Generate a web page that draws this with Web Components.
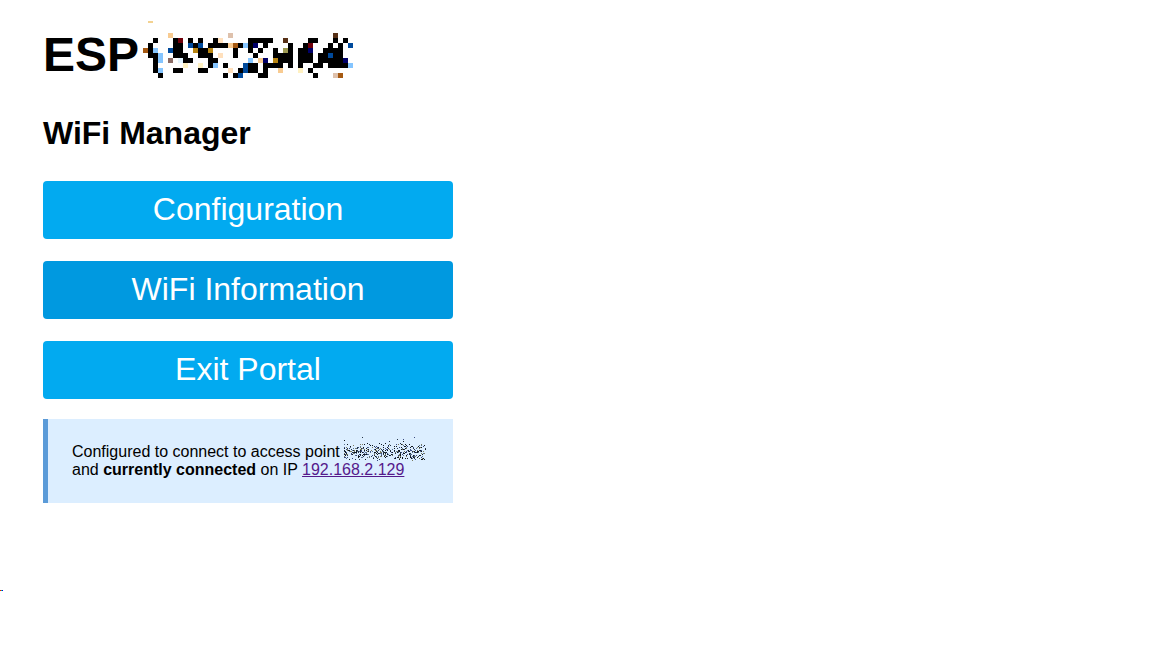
<!DOCTYPE html>
<html lang="en">
<head>
<meta charset="utf-8">
<meta name="viewport" content="width=device-width, initial-scale=1">
<title>WiFi Manager</title>
<style>
body { margin: 0; background: #fff; color: #000; font-family: "Liberation Sans", Arial, sans-serif; }
</style>
</head>
<body>
<wifi-portal>
  <portal-heading slot="title">ESP</portal-heading>
  <span slot="subtitle">WiFi Manager</span>
  <portal-button>Configuration</portal-button>
  <portal-button active>WiFi Information</portal-button>
  <portal-button>Exit Portal</portal-button>
  <status-note slot="status">Configured to connect to access point <masked-name></masked-name><br>and <strong>currently connected</strong> on IP <portal-link address="192.168.2.129"></portal-link></status-note>
</wifi-portal>
<script>
class PortalElement extends HTMLElement {
  constructor() {
    super();
    this.attachShadow({ mode: 'open' }).innerHTML = this.template();
  }
}

customElements.define('wifi-portal', class extends PortalElement {
  template() {
    return `<style>
      :host { display: block; padding-top: 21px; }
      main { max-width: 410px; margin-left: 43px; }
      h1, h3 { margin: 0; font-weight: bold; }
      h1 { font-size: 48px; line-height: 60px; }
      h3 { font-size: 32px; line-height: 38px; margin: 29px 0; }
      nav { display: grid; gap: 22px; margin-bottom: 20px; }
      footer { margin-top: 87px; }
      svg { display: block; }
    </style>
    <main>
      <h1><slot name="title"></slot></h1>
      <h3><slot name="subtitle"></slot></h3>
      <nav><slot></slot></nav>
      <slot name="status"></slot>
    </main>
    <footer><svg width="3" height="1" shape-rendering="crispEdges" aria-hidden="true"><path fill="#f00" d="M0 0h1v1H0z"/><path fill="#0c6" d="M1 0h1v1H1z"/><path fill="#00f" d="M2 0h1v1H2z"/></svg></footer>`;
  }
});

/* Device identifier, shown as a mosaic of 5px cells after the prefix. */
const COLORS = { K: '#000', R: '#70000a', T: '#f8cb91', B: '#004a9c', L: '#85c5ff', N: '#a65a13', G: '#b88512', M: '#8b6b65', C: '#fff1c2', P: '#ffe0bd', V: '#000068', D: '#573016', O: '#9c9952', E: '#dec1ac', W: '#e4f5ff' };
const MOSAIC = [
  '.....T...........E....................D...',
  '..K...KR.K.K..KP.....KKKKK..D....KK...K.K.',
  '.K....KK.BKB.KKKKTNKLKV.K....K..KR...K.K.B',
  'NKL..BKK..GKKG....K..K.K..K.OK.KKV..KKKK..',
  '.KKL..KKK..KKK.P..K...K...KKKK.KKK.KKBKK..',
  '..KL.M.WKK...KK......L.TV.GKKK.KKK.KKKKKV.',
  '..K.....C..C.KL.K...BKK.KKKK.K.K..KK.KKKKL',
  '..KL..KK...KK....P.KBKK.K..T...C.K........',
  '...K............K.KB...KK.........K...EN..'
];

customElements.define('portal-heading', class extends PortalElement {
  template() {
    const cells = MOSAIC.flatMap((row, y) => [...row].map((c, x) =>
      c === '.' ? '' : `<rect x="${x * 5}" y="${y * 5 + 12}" width="5" height="5" fill="${COLORS[c]}"/>`)).join('');
    return `<style>
      :host { display: flex; align-items: flex-start; gap: 4px; }
      span { padding-top: 4px; }
      svg { display: block; flex: none; }
    </style><span><slot></slot></span>
    <svg width="210" height="57" shape-rendering="crispEdges" role="img" aria-label="Hidden identifier"><rect x="5" width="5" height="2" fill="#f3d291"/>${cells}</svg>`;
  }
});

customElements.define('portal-button', class extends PortalElement {
  template() {
    return `<style>
      :host { display: block; --fill: #02aaf0; }
      :host([active]) { --fill: #0099e0; }
      button { display: block; width: 100%; height: 58px; margin: 0; padding: 0 0 2px; border: 0; border-radius: 4px; background: var(--fill); color: #fff; font: 32px/56px "Liberation Sans", Arial, sans-serif; cursor: pointer; }
      button:hover { background: #0099e0; }
    </style><button type="button"><slot></slot></button>`;
  }
});

customElements.define('status-note', class extends PortalElement {
  template() {
    return `<style>
      :host { display: block; padding: 24px; border-left: 5px solid #5b9bd8; background: #dceeff; font-size: 16px; line-height: 18px; }
    </style><slot></slot>`;
  }
});

/* Access point name, scattered as fine speckles. */
customElements.define('masked-name', class extends PortalElement {
  template() {
    const tones = ['#101820', '#101820', '#26364a', '#5a7290', '#3a4a80', '#7b7a5c'];
    let seed = 7;
    const next = () => (seed = (seed * 16807) % 2147483647) / 2147483647;
    let dots = '';
    for (let i = 0; i < 500; i++) {
      const x = Math.floor(next() * 82);
      const stray = next() < 0.02;
      const y = stray ? Math.floor(next() * 8) : 6 + Math.floor((next() + next()) * 9);
      dots += `<rect x="${x}" y="${y}" width="1" height="1" fill="${tones[Math.floor(next() * tones.length)]}"/>`;
    }
    return `<style>
      :host { display: inline-block; width: 82px; height: 18px; vertical-align: top; }
      svg { display: block; margin-top: -6px; }
    </style><svg width="82" height="24" shape-rendering="crispEdges" role="img" aria-label="Hidden access point name">${dots}</svg>`;
  }
});

customElements.define('portal-link', class extends PortalElement {
  template() {
    const address = this.getAttribute('address');
    return `<style>
      :host { display: inline; }
      a { color: #551a8b; text-decoration: underline; }
    </style><a href="http://${address}/">${address}</a>`;
  }
});
</script>
</body>
</html>
